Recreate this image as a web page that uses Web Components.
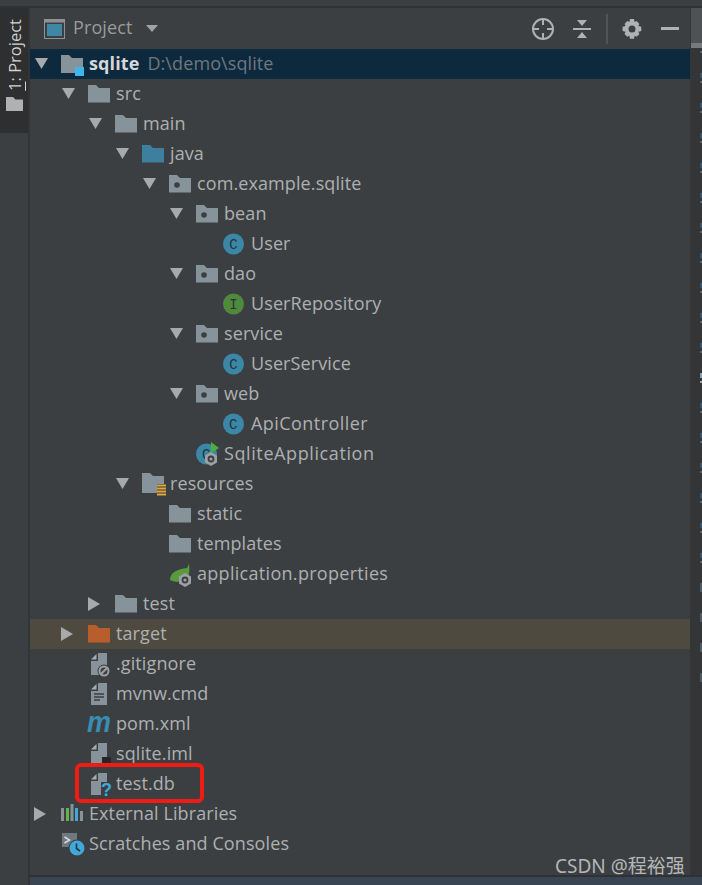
<!DOCTYPE html>
<html>
<head>
<meta charset="utf-8">
<style>
  html, body { margin: 0; padding: 0; background: #3c3f41; }
  body { font-family: "Open Sans", "Noto Sans", sans-serif; }
</style>
</head>
<body>
<ide-window>
  <tool-stripe slot="stripe"></tool-stripe>
  <panel-header slot="header"></panel-header>
  <project-tree slot="tree">
    <tree-row depth="0" arrow="open" icon="module" selected><b>sqlite</b><span slot="hint">D:\demo\sqlite</span></tree-row>
    <tree-row depth="1" arrow="open" icon="folder">src</tree-row>
    <tree-row depth="2" arrow="open" icon="folder">main</tree-row>
    <tree-row depth="3" arrow="open" icon="source">java</tree-row>
    <tree-row depth="4" arrow="open" icon="package">com.example.sqlite</tree-row>
    <tree-row depth="5" arrow="open" icon="package">bean</tree-row>
    <tree-row depth="6" icon="class">User</tree-row>
    <tree-row depth="5" arrow="open" icon="package">dao</tree-row>
    <tree-row depth="6" icon="iface">UserRepository</tree-row>
    <tree-row depth="5" arrow="open" icon="package">service</tree-row>
    <tree-row depth="6" icon="class">UserService</tree-row>
    <tree-row depth="5" arrow="open" icon="package">web</tree-row>
    <tree-row depth="6" icon="class" style="letter-spacing:.45px">ApiController</tree-row>
    <tree-row depth="5" icon="boot" style="letter-spacing:.6px">SqliteApplication</tree-row>
    <tree-row depth="3" arrow="open" icon="resources">resources</tree-row>
    <tree-row depth="4" icon="folder">static</tree-row>
    <tree-row depth="4" icon="folder">templates</tree-row>
    <tree-row depth="4" icon="props" style="letter-spacing:.3px">application.properties</tree-row>
    <tree-row depth="2" arrow="closed" icon="folder">test</tree-row>
    <tree-row depth="1" arrow="closed" icon="excluded" ignored>target</tree-row>
    <tree-row depth="1" icon="gitignore">.gitignore</tree-row>
    <tree-row depth="1" icon="textfile">mvnw.cmd</tree-row>
    <tree-row depth="1" icon="maven">pom.xml</tree-row>
    <tree-row depth="1" icon="iml">sqlite.iml</tree-row>
    <tree-row depth="1" icon="unknown">test.db</tree-row>
    <tree-row depth="0" arrow="closed" icon="libs">External Libraries</tree-row>
    <tree-row depth="0" icon="scratch">Scratches and Consoles</tree-row>
  </project-tree>
  <mark-strip slot="marks"></mark-strip>
  <red-box slot="overlay"></red-box>
  <water-mark slot="overlay">CSDN @程裕强</water-mark>
</ide-window>

<script>
const FOLDER = 'M0 2h8l3 3h11v14.500H0z';
const DOC = '<path d="M3 6.500 8.500 1v5.500z" fill="#a4adb2"/><path d="M10 0h9v22H3V8h7z" fill="#87939a"/>';
const GEAR = (x, y) => `<g transform="translate(${x} ${y})"><path d="M0-7 6-3.500v7L0 7-6 3.500v-7z" fill="#9da1a4"/><circle r="3.400" fill="#3c3f41"/><circle r="1.600" fill="#9da1a4"/></g>`;
const CLASS_DISC = (fill, letter) => `<circle cx="10.500" cy="11" r="10.500" fill="${fill}"/><text x="10.500" y="15.500" text-anchor="middle" font-family="Liberation Mono" font-size="14" fill="#2c3236">${letter}</text>`;

const ICONS = {
  folder: `<path d="${FOLDER}" fill="#87939a"/>`,
  source: `<path d="${FOLDER}" fill="#3c7f9e"/>`,
  excluded: `<path d="${FOLDER}" fill="#b85e2c"/>`,
  package: `<path d="${FOLDER}" fill="#87939a"/><circle cx="8" cy="12" r="2.800" fill="#3c3f41"/>`,
  module: `<path d="M0 2h8l3 3h11v9H14v6H0z" fill="#87939a"/><rect x="14" y="14" width="9" height="9" fill="#3fb5e8"/>`,
  resources: `<path d="M0 0h8l3 3h11v8h-7v9H0z" fill="#87939a"/><path d="M15 12.500h9M15 15.500h9M15 18.500h9M15 21.500h9" stroke="#e0a63c" stroke-width="2"/>`,
  class: CLASS_DISC('#3a87a8', 'C'),
  iface: CLASS_DISC('#4f8a3c', 'I'),
  boot: `<circle cx="10.500" cy="11" r="10.500" fill="#3a87a8"/><text x="10.500" y="15.500" text-anchor="middle" font-family="Liberation Mono" font-size="14" fill="#2c3236">C</text><path d="M15-1 23 5l-8 5z" fill="#4caf3c"/>${GEAR(15, 16)}`,
  props: `<path d="M1 17C1 9 9 6 18 5l2-4c1 8 0 12-3 15-4 3-10 4-16 1z" fill="#5a9a3e"/>${GEAR(16, 17)}`,
  gitignore: `${DOC}<circle cx="16" cy="18" r="6.500" fill="#3c3f41"/><circle cx="16" cy="18" r="4.500" fill="none" stroke="#9da1a4" stroke-width="2"/><path d="m13 21 6-6" stroke="#9da1a4" stroke-width="2"/>`,
  textfile: `${DOC}<path d="M6 11h10M6 14h10M6 17h6" stroke="#3c3f41" stroke-width="1.600"/>`,
  maven: `<text x="-1" y="19" font-family="Liberation Sans" font-weight="700" font-style="italic" font-size="30" textLength="24" lengthAdjust="spacingAndGlyphs" fill="#3a8cb0">m</text>`,
  iml: `${DOC}<rect x="14" y="14" width="9" height="8" fill="#262626"/>`,
  unknown: `${DOC}<rect x="13" y="9" width="11" height="15" fill="#3c3f41"/><text x="18.500" y="23" text-anchor="middle" font-family="Liberation Sans" font-weight="700" font-size="18" fill="#3fa9dc">?</text>`,
  libs: `<path d="M0 5h3v13H0zM9.500 1H12.500v17H9.500zM19 8h3v10h-3z" fill="#87939a"/><path d="M5 5h3v13H5z" fill="#62b543"/><path d="M14 5h3v13h-3z" fill="#40a8d8"/>`,
  scratch: `<path d="M1 0h15v14H1z" fill="#6f7a80"/><path d="m3.500 4 5 3-5 3" fill="none" stroke="#d8dadb" stroke-width="1.500"/><circle cx="16" cy="15" r="8.500" fill="#3c3f41"/><circle cx="16" cy="15" r="7.500" fill="#3fa9dc"/><path d="M15.500 10.500v5l3.500 2.500" fill="none" stroke="#2c3236" stroke-width="1.600"/>`
};

class IdeWindow extends HTMLElement {
  constructor() {
    super();
    this.attachShadow({ mode: 'open' }).innerHTML = `
      <style>
        :host { display: grid; grid-template-columns: 28px 2px 1fr; grid-template-rows: 6px 2px 1fr 2px 8px; width: 702px; height: 885px; background: #3c3f41; position: relative; overflow: hidden; }
        .top { grid-column: 1 / -1; grid-row: 2; background: #303234; }
        .stripe { grid-column: 1; grid-row: 3 / -1; }
        .rule { grid-column: 2; grid-row: 3 / -1; background: #323436; }
        .main { grid-column: 3; grid-row: 3; display: grid; grid-template-columns: 1fr 12px; min-height: 0; }
        .left { display: flex; flex-direction: column; min-width: 0; }
        .foot { grid-column: 3; grid-row: 4; background: #2f3133; }
        .status { grid-column: 3; grid-row: 5; background: #394553; }
      </style>
      <div class="top"></div>
      <div class="stripe"><slot name="stripe"></slot></div>
      <div class="rule"></div>
      <div class="main">
        <div class="left"><slot name="header"></slot><slot name="tree"></slot></div>
        <slot name="marks"></slot>
      </div>
      <div class="foot"></div>
      <div class="status"></div>
      <slot name="overlay"></slot>`;
  }
}

class ToolStripe extends HTMLElement {
  constructor() {
    super();
    this.attachShadow({ mode: 'open' }).innerHTML = `
      <style>
        :host { display: block; }
        .tab { height: 125px; background: #2d2f30; display: flex; flex-direction: column; align-items: center; padding-top: 11px; box-sizing: border-box; gap: 6px; }
        .label { writing-mode: vertical-rl; transform: rotate(180deg); font: 16.500px "Open Sans", sans-serif; color: #cfd1d2; line-height: 16px; margin-left: 2px; }
        u { text-underline-offset: 2px; }
        svg { display: block; }
      </style>
      <div class="tab">
        <span class="label"><u>1</u>: Project</span>
        <svg width="17" height="14" viewBox="0 0 17 14"><path d="M0 0h7l2.500 2.500H17V14H0z" fill="#afb1b3"/></svg>
      </div>`;
  }
}

class PanelHeader extends HTMLElement {
  constructor() {
    super();
    this.attachShadow({ mode: 'open' }).innerHTML = `
      <style>
        :host { display: flex; align-items: center; height: 41px; padding-left: 14px; box-sizing: border-box; color: #989b9d; font: 18px "Open Sans", sans-serif; letter-spacing: .1px; }
        svg { display: block; flex: none; }
        .name { margin: -4px 0 0 8px; }
        .caret { margin-left: 14px; }
        .tools { margin-left: auto; display: flex; align-items: center; }
        .sep { width: 2px; height: 30px; background: #515456; margin: 0 14px 0 15px; }
      </style>
      <svg width="21" height="20" viewBox="0 0 21 20"><rect x=".5" y=".5" width="20" height="19" fill="none" stroke="#8f9294"/><rect x="1" y="1" width="19" height="2.500" fill="#8f9294"/><rect x="3" y="5" width="15" height="12" fill="#3f87a6"/></svg>
      <span class="name">Project</span>
      <svg class="caret" width="12" height="7" viewBox="0 0 12 7"><path d="M0 0h12L6 7z" fill="#a0a3a5"/></svg>
      <div class="tools">
        <svg width="22" height="22" viewBox="0 0 22 22" style="margin-right:19px" fill="none" stroke="#afb1b3" stroke-width="2"><circle cx="11" cy="11" r="10"/><path d="M11 1v6M11 15v6M1 11h6M15 11h6"/></svg>
        <svg width="18" height="20" viewBox="0 0 18 20" fill="#afb1b3"><path d="M0 9h18v2H0zM4 1h10L9 7zM4 19h10L9 13z"/></svg>
        <div class="sep"></div>
        <svg width="20" height="20" viewBox="0 0 20 20"><path fill="#afb1b3" fill-rule="evenodd" d="M8 0h4l.6 3 2-.9 2.800 2.800-1.100 2.100 3 .7v4.400l-3 .7 1.100 2.100-2.800 2.800-2-1-.6 3H8l-.7-3-2 1-2.800-2.800 1.100-2.100-3-.7V7.700l3-.7-1.100-2.100 2.800-2.800 2 .9zM10 6.500a3.500 3.500 0 1 0 0 7 3.500 3.500 0 0 0 0-7z"/></svg>
        <svg width="18" height="3" viewBox="0 0 18 3" style="margin:0 11px 0 19px"><rect width="18" height="3" fill="#afb1b3"/></svg>
      </div>`;
  }
}

class ProjectTree extends HTMLElement {
  constructor() {
    super();
    this.attachShadow({ mode: 'open' }).innerHTML = `
      <style>:host { display: block; }</style>
      <slot></slot>`;
  }
}

class TreeRow extends HTMLElement {
  constructor() {
    super();
    this.attachShadow({ mode: 'open' }).innerHTML = `
      <style>
        :host { display: flex; align-items: center; height: 30px; color: #adb0b2; font: 18px/30px "Open Sans", sans-serif; letter-spacing: .1px; white-space: nowrap; }
        :host([selected]) { background: #0d293e; }
        :host([ignored]) { background: #4e4a3f; }
        .arrow { width: 28px; height: 14px; flex: none; display: flex; align-items: center; margin-top: -2px; }
        .arrow svg.open { margin-left: 2px; }
        .arrow svg.closed { margin-left: 1px; margin-top: 2px; }
        .icon { width: 22px; height: 22px; flex: none; margin-right: 6px; overflow: visible; display: block; }
        .text { margin-top: -2px; }
        ::slotted(b) { color: #d5d8da; font-weight: 700; }
        ::slotted([slot=hint]) { color: #6f787e; margin-left: 8px; }
      </style>
      <span class="arrow"></span>
      <svg class="icon" viewBox="0 0 22 22"></svg>
      <span class="text"><slot></slot><slot name="hint"></slot></span>`;
  }

  connectedCallback() {
    const depth = Number(this.getAttribute('depth'));
    this.style.paddingLeft = `${3 + 27 * depth}px`;
    const arrow = this.getAttribute('arrow');
    const $arrow = this.shadowRoot.querySelector('.arrow');
    if (arrow === 'open') {
      $arrow.innerHTML = '<svg class="open" width="13" height="11" viewBox="0 0 13 11"><path d="M0 0h13L6.500 11z" fill="#a8a9aa"/></svg>';
    } else if (arrow === 'closed') {
      $arrow.innerHTML = '<svg class="closed" width="12" height="14" viewBox="0 0 12 14"><path d="M0 0l12 7-12 7z" fill="#a8a9aa"/></svg>';
    }
    this.shadowRoot.querySelector('.icon').innerHTML = ICONS[this.getAttribute('icon')] || '';
  }
}

class MarkStrip extends HTMLElement {
  constructor() {
    super();
    let marks = '';
    for (let i = 0; i < 22; i += 1) {
      const kind = i < 18 ? 'tick' : 'round';
      marks += `<i class="${kind}${i === 11 ? ' hot' : ''}"></i>`;
    }
    this.attachShadow({ mode: 'open' }).innerHTML = `
      <style>
        :host { display: block; background: #333536; overflow: hidden; }
        .thumb { position: relative; height: 35px; background: #4f5254; border-bottom: 5px solid #767a7d; margin-left: 1px; }
        .list { display: flex; flex-direction: column; align-items: flex-end; margin-top: -5px; }
        i { display: block; height: 30px; width: 2px; background: linear-gradient(#35536b 5px, transparent 5px 8px, #5a6268 8px 10px, transparent 10px); }
        i.hot { background: linear-gradient(#7f9dbb 5px, transparent 5px 8px, #a0a4a8 8px 10px, transparent 10px); }
        i.round { background: linear-gradient(#4c5a66 9px, transparent 9px); }
      </style>
      <div class="thumb"></div>
      <div class="list">${marks}</div>`;
  }
}

class RedBox extends HTMLElement {
  constructor() {
    super();
    this.attachShadow({ mode: 'open' }).innerHTML = `
      <style>
        :host { position: absolute; left: 75px; top: 763px; width: 129px; height: 40px; box-sizing: border-box; border: 4px solid #f01c14; border-radius: 6px; }
      </style>`;
  }
}

class WaterMark extends HTMLElement {
  constructor() {
    super();
    this.attachShadow({ mode: 'open' }).innerHTML = `
      <style>
        :host { position: absolute; left: 555px; top: 853px; color: #b4b6b7; font: 19px/26px "Noto Sans", "Noto Sans CJK SC", sans-serif; white-space: nowrap; }
      </style>
      <slot></slot>`;
  }
}

customElements.define('ide-window', IdeWindow);
customElements.define('tool-stripe', ToolStripe);
customElements.define('panel-header', PanelHeader);
customElements.define('project-tree', ProjectTree);
customElements.define('tree-row', TreeRow);
customElements.define('mark-strip', MarkStrip);
customElements.define('red-box', RedBox);
customElements.define('water-mark', WaterMark);
</script>
</body>
</html>
